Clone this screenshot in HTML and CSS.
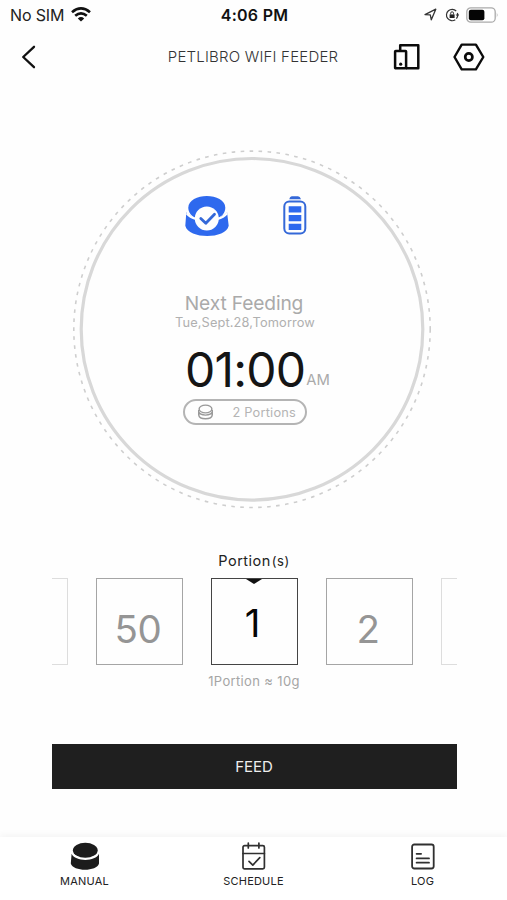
FILE: index.html
```html
<!DOCTYPE html>
<html lang="en">
<head>
<meta charset="utf-8">
<title>PETLIBRO WIFI FEEDER</title>
<link rel="stylesheet" href="styles.css">
</head>
<body>
<div class="app">
  <header class="status">
    <div class="carrier"><span>No SIM</span>
      <svg width="20" height="15" viewBox="0 0 20 15" fill="none" stroke="#111" stroke-width="2.7"><path d="M1 5.2Q10-2.4 19 5.2M4.2 8.7Q10 3.9 15.8 8.7"/><path d="M6.8 11.4Q10 8.8 13.2 11.4L10 14.6Z" fill="#111" stroke="none"/></svg>
    </div>
    <div class="clock">4:06 PM</div>
    <div class="indicators">
      <svg width="13" height="13" viewBox="0 0 13 13" fill="none" stroke="#333" stroke-width="1.3" stroke-linejoin="round"><path d="M1 6.6 11.8 1.2 7.3 11.8 6.3 6.8Z"/></svg>
      <svg width="15" height="14" viewBox="0 0 15 14" fill="none" stroke="#333" stroke-width="1.2"><path d="M11.2 3A5.7 5.7 0 1 0 10.3 11.8M12.4 5A5.7 5.7 0 0 1 11.4 10.6"/><path d="m10.6 6.5 1.9 2.2 1.7-2.2Z" fill="#333" stroke="none"/><path d="M4.6 6.4h5v3.6h-5Z" fill="#222" stroke="none"/><path d="M5.7 6.5V5.2a1.4 1.4 0 0 1 2.8 0v1.3" stroke-width="1"/></svg>
      <svg width="33" height="16" viewBox="0 0 33 16"><rect x=".8" y=".8" width="28.4" height="14.4" rx="4" fill="#fff" stroke="#aaa" stroke-width="1.3"/><rect x="2.8" y="2.8" width="15.6" height="10.4" rx="2" fill="#050505"/><path d="M30.8 5.5q1.6 2.5 0 5Z" fill="#aaa"/></svg>
    </div>
  </header>

  <nav class="titlebar">
    <svg class="back" width="16" height="26" viewBox="0 0 16 26" fill="none" stroke="#111" stroke-width="2.3" stroke-linecap="round" stroke-linejoin="round"><path d="M13 2.8 2.2 13 13 23.2"/></svg>
    <h1>PETLIBRO WIFI FEEDER</h1>
    <div class="actions">
      <svg width="28" height="28" viewBox="0 0 28 28" fill="none" stroke="#0b0b0b" stroke-width="2.5" stroke-linejoin="round"><path d="M7.2 7V2.2H25.3V25.3H13"/><rect x="2.1" y="8" width="11" height="17.3" rx=".6"/><circle cx="7.7" cy="21.2" r="1.6" fill="#0b0b0b" stroke="none"/></svg>
      <svg width="32" height="28" viewBox="0 0 32 28" fill="none" stroke="#0b0b0b" stroke-width="2.4" stroke-linejoin="round"><path d="M8.7 1.6H22.9L30.3 14 22.9 26.4H8.7L1.5 14Z"/><circle cx="15.8" cy="14" r="3.6" stroke-width="2.7"/></svg>
    </div>
  </nav>

  <main>
    <section class="dial">
      <svg class="rings" width="362" height="362" viewBox="0 0 362 362" fill="none"><circle cx="181" cy="181.3" r="178.2" stroke="#cecece" stroke-width="1.6" stroke-dasharray="3.6 5.4"/><circle cx="181" cy="181.3" r="170.8" stroke="#d8d8d8" stroke-width="3.2"/></svg>
      <div class="dial-body">
        <div class="states">
          <svg width="46" height="42" viewBox="0 0 46 42"><path d="M2.3 17.5 22 31 43.1 17.5 44.7 30.8C42 44.5 4.5 44.5 1.3 30.8Z" fill="#2e69ee"/><ellipse cx="22.8" cy="12.3" rx="20.2" ry="13" fill="#fefefe"/><path d="M4.3 12.8C4.3-3 41.3-3 41.3 12.8 41.3 17 38.7 20.6 35 22.8H10.6C7 20.6 4.3 17 4.3 12.8Z" fill="#2e69ee"/><path d="M2.6 18.2Q6 22.3 12 24M43.1 18.2Q39.5 22.3 33.5 24" stroke="#fefefe" stroke-width="2.2" fill="none"/><circle cx="22.8" cy="23.4" r="12" fill="#fefefe"/><path d="m16.8 23.4 5 4.8 8.7-8.9" fill="none" stroke="#3468d8" stroke-width="2.8" stroke-linecap="round" stroke-linejoin="round"/></svg>
          <svg width="24" height="40" viewBox="0 0 24 40"><path d="M6.3 4.3Q7 1.2 9 1.2h6q2 0 3 3.1Z" fill="#3468d8"/><rect x="1.3" y="6.6" width="21" height="32" rx="5" fill="none" stroke="#3468d8" stroke-width="2"/><path d="M5.7 11.2h12.6v6.2H5.7ZM5.7 20h12.6v6.2H5.7ZM5.7 28.8h12.6v6.2H5.7Z" fill="#2e69ee"/></svg>
        </div>
        <div class="next">Next Feeding</div>
        <div class="date">Tue,Sept.28,Tomorrow</div>
        <div class="time"><span class="digits">01:00</span><span class="ampm">AM</span></div>
        <div class="pill">
          <svg width="17" height="16" viewBox="0 0 17 16" fill="none" stroke="#999" stroke-width="1.4"><ellipse cx="8.5" cy="5" rx="6.4" ry="3.9"/><path d="M1.7 6V10.800C2.300 16 14.700 16 15.300 10.800V6M1.700 7.800C3 12.200 14 12.200 15.300 7.800"/></svg>
          <span>2 Portions</span>
        </div>
      </div>
    </section>

    <section class="picker">
      <h2>Portion<span>(s)</span></h2>
      <div class="tiles">
        <div class="tile faint"></div>
        <div class="tile"><span>50</span></div>
        <div class="tile current"><span>1</span></div>
        <div class="tile"><span>2</span></div>
        <div class="tile faint"></div>
      </div>
      <p>1Portion ≈ 10g</p>
    </section>
    <button class="feed">FEED</button>
  </main>

  <footer class="tabs">
    <div class="tab manual">
      <svg width="30" height="28" viewBox="0 0 30 28" fill="#1c1c1c"><ellipse cx="15.3" cy="8.2" rx="12.4" ry="7.5"/><path d="M1.6 11.8C5 20 25.7 20 29 11.8V21.5C27 29.8 3 29.8.8 21.5Z"/></svg>
      <span>MANUAL</span>
    </div>
    <div class="tab schedule">
      <svg width="24" height="28" viewBox="0 0 24 28" fill="none" stroke="#303030" stroke-width="1.7" stroke-linecap="round" stroke-linejoin="round"><rect x="1" y="3.6" width="21.4" height="23.2" rx="1.6"/><path d="M1 11.5H22.4M6.3 1V6M16.9 1V6M7 19.3l3.8 3.8 7-7.5"/></svg>
      <span>SCHEDULE</span>
    </div>
    <div class="tab log">
      <svg width="24" height="28" viewBox="0 0 24 28" fill="none" stroke="#303030" stroke-width="1.8" stroke-linecap="round"><rect x="1.1" y="2.5" width="21.6" height="24" rx="2.2"/><path d="M5.6 11.8h4.5M5.6 16.4H18M5.6 20.7H18"/></svg>
      <span>LOG</span>
    </div>
  </footer>
</div>
</body>
</html>
```
FILE: styles.css
```css
* { box-sizing: border-box; }
body { margin: 0; background: #fff; font-family: Inter, "Liberation Sans", sans-serif; color: #222; }
svg { display: block; flex: none; }
h1, h2, p { margin: 0; font-weight: 400; }
.app { width: 507px; height: 900px; display: flex; flex-direction: column; overflow: hidden; background: #fefefe; }

.status { height: 29px; display: grid; grid-template-columns: 1fr auto 1fr; align-items: center; padding: 0 8px 0 10px; }
.carrier { display: flex; align-items: center; gap: 7px; font-size: 16px; letter-spacing: -.15px; }
.clock { font-size: 16px; font-weight: 600; color: #111; letter-spacing: .25px; }
.indicators { display: flex; align-items: center; justify-content: flex-end; gap: 8px; }
.indicators svg:last-child { margin-left: -2px; }

.titlebar { height: 55px; display: grid; grid-template-columns: 1fr auto 1fr; align-items: center; padding: 0 22px 0 21px; }
.titlebar h1 { font-size: 15px; font-weight: 300; color: #333; white-space: nowrap; letter-spacing: .2px; }
.actions { display: flex; justify-content: flex-end; gap: 32px; }

main { flex: 1; display: flex; flex-direction: column; padding-top: 64px; }
.dial { width: 362px; height: 362px; margin-left: 70.5px; display: grid; }
.rings, .dial-body { grid-area: 1 / 1; }
.dial-body { display: flex; flex-direction: column; align-items: center; padding-top: 47px; white-space: nowrap; }
.states { display: flex; justify-content: space-between; width: 123px; height: 42px; margin-right: 13px; }
.next { height: 24px; line-height: 24px; margin-top: 54px; margin-right: 15px; font-size: 19.2px; font-weight: 400; color: #aaa; letter-spacing: -.15px; }
.date { height: 16px; line-height: 16px; margin-right: 13px; font-size: 12.8px; font-weight: 400; color: #b0b0b0; letter-spacing: .12px; }
.time { display: flex; align-items: baseline; height: 60px; line-height: 60px; margin: 9px 0 0 12px; color: #151515; }
.digits { font-size: 48px; font-weight: 400; letter-spacing: -.8px; }
.ampm { position: relative; top: -2px; font-size: 14.8px; font-weight: 400; color: #aaa; margin-left: 1px; }
.pill { display: flex; align-items: center; justify-content: space-between; width: 124px; height: 26px; margin-top: -1px; margin-right: 13px; padding: 0 9px 0 12px; border: 2px solid #b4b4b4; border-radius: 13px; font-size: 12.8px; font-weight: 400; color: #b4b4b4; letter-spacing: .2px; }

.picker { width: 405px; margin: 40px 0 0 51.5px; display: flex; flex-direction: column; align-items: center; }
.picker h2 { height: 22px; line-height: 22px; font-size: 14.5px; color: #222; letter-spacing: .5px; }
.picker h2 span { font-size: 13px; margin-left: 1px; }
.tiles { width: 405px; height: 87px; margin-top: 6px; overflow: hidden; display: flex; justify-content: center; gap: 28px; }
.tile { position: relative; flex: none; width: 87px; height: 87px; border: 1.5px solid #a5a5a5; display: flex; justify-content: center; padding-top: 29px; line-height: 42px; font-size: 38.5px; font-weight: 400; color: #959595; letter-spacing: -.3px; }
.tile:nth-child(2) { padding-right: 2px; }
.tile:nth-child(4) { padding-right: 2px; }
.tile.faint { border-color: #ddd; }
.tile.current { border-color: #444; color: #050505; padding: 23px 3px 0 0; }
.tile.current::before { content: ""; position: absolute; top: 0; left: 34px; border: solid transparent; border-width: 5px 8px 0; border-top-color: #111; }
.picker p { height: 20px; line-height: 20px; margin-top: 6px; font-size: 13px; color: #a5a5a5; letter-spacing: .35px; }
.feed { width: 405px; height: 45px; margin: 53px 0 0 51.5px; border: 0; background: #1f1f1f; color: #eee; font: 400 15px Inter, sans-serif; }

.tabs { height: 63px; display: grid; grid-template-columns: repeat(3, 1fr); background: #fff; box-shadow: 0 -3px 6px rgba(0,0,0,.035); }
.tab { display: flex; flex-direction: column; align-items: center; padding-top: 5px; gap: 3px; font-size: 11px; line-height: 16px; letter-spacing: .2px; }
```
